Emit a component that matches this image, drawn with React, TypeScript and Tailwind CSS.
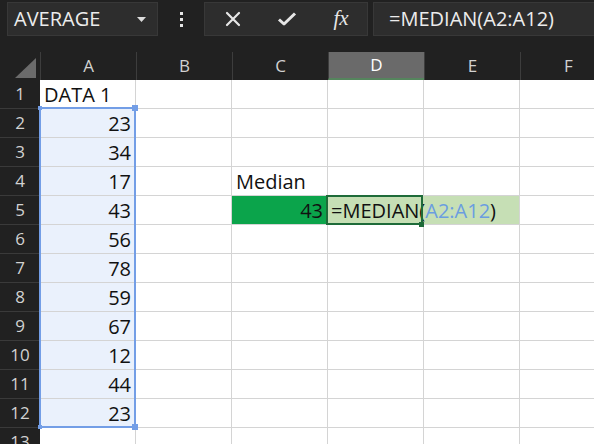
import React from "react"

const cols = ["A", "B", "C", "D", "E", "F"]
const data = ["DATA 1", "23", "34", "17", "43", "56", "78", "59", "67", "12", "44", "23", ""]

const XIcon = () => (
  <svg width="16" height="16" viewBox="0 0 16 16">
    <path d="M2 2 L14 14 M14 2 L2 14" stroke="#e6e6e6" strokeWidth="2.2" strokeLinecap="round" />
  </svg>
)

const CheckIcon = () => (
  <svg width="20" height="16" viewBox="0 0 20 16">
    <path d="M2 8.5 L7 13 L18 2.5" stroke="#e6e6e6" strokeWidth="3" fill="none" strokeLinejoin="round" />
  </svg>
)

const Cell = ({ row, col }: { row: number; col: number }) => {
  // column A holds the data, C4/C5 the label and result, D5 is being edited
  if (col === 0) {
    const text = data[row - 1]
    const inSel = row >= 2 && row <= 12
    return (
      <div
        className={`w-[96px] shrink-0 h-full border-r border-b border-[#d4d4d4] flex items-end pb-[1px] px-[4px] leading-[24px] ${
          inSel ? "bg-[#eaf1fc] justify-end" : "bg-white"
        }`}
      >
        {text}
      </div>
    )
  }
  if (col === 2 && row === 4) {
    return (
      <div className="w-[96px] shrink-0 h-full border-r border-b border-[#d4d4d4] bg-white flex items-end pb-[1px] px-[4px] leading-[24px]">
        Median
      </div>
    )
  }
  if (col === 2 && row === 5) {
    return (
      <div className="w-[96px] shrink-0 h-full border-r border-b border-[#d4d4d4] bg-[#0ba44b] flex items-end justify-end pb-[1px] px-[4px] leading-[24px]">
        43
      </div>
    )
  }
  if (col === 3 && row === 5) {
    return (
      <div className="relative z-10 w-[96px] shrink-0 h-full border-b border-[#d4d4d4] bg-[#c6dfb5] flex items-end pb-[1px] pl-[3px] leading-[24px] whitespace-nowrap overflow-visible">
        <span>=MEDIAN(</span>
        <span className="text-[#6b9de0]">A2:A12</span>
        <span>)</span>
        <span className="ml-[2px] mb-[1px] w-px h-[21px] bg-black" />
      </div>
    )
  }
  if (col === 4 && row === 5) {
    return <div className="w-[96px] shrink-0 h-full border-r border-b border-[#d4d4d4] bg-[#c6dfb5]" />
  }
  return <div className="w-[96px] shrink-0 h-full border-r border-b border-[#d4d4d4] bg-white" />
}

export default function App() {
  const rows = Array.from({ length: 13 }, (_, i) => i + 1)
  return (
    <div className="w-[594px] h-[444px] overflow-hidden bg-[#212121] font-['Open_Sans',sans-serif] text-[20px] text-[#111]">
      {/* formula bar */}
      <div className="h-[52px] flex items-start pt-[2px] pl-[7px]">
        <div className="w-[151px] h-[34px] shrink-0 bg-[#2d2d2d] border border-[#383838] flex items-center justify-between pl-[6px] pr-[11px] text-[#ececec]">
          <span>AVERAGE</span>
          <svg width="9" height="5" viewBox="0 0 9 5">
            <path d="M0 0 L9 0 L4.5 5 Z" fill="#dcdcdc" />
          </svg>
        </div>
        <div className="w-[46px] h-[34px] shrink-0 flex flex-col items-center justify-center gap-[3px]">
          <div className="w-[3px] h-[3px] bg-[#e6e6e6]" />
          <div className="w-[3px] h-[3px] bg-[#e6e6e6]" />
          <div className="w-[3px] h-[3px] bg-[#e6e6e6]" />
        </div>
        <div className="w-[164px] h-[34px] shrink-0 bg-[#2d2d2d] border border-[#383838] flex items-center">
          <div className="w-[54px] flex justify-center pl-[2px]">
            <XIcon />
          </div>
          <div className="w-[56px] flex justify-center">
            <CheckIcon />
          </div>
          <div className="w-[52px] flex justify-center font-['Liberation_Serif',serif] italic text-[21px] text-[#e6e6e6] leading-none pb-[2px]">
            fx
          </div>
        </div>
        <div className="ml-[5px] flex-1 h-[34px] bg-[#2d2d2d] border border-[#383838] border-r-0 flex items-center pl-[15px] text-[#ececec] whitespace-nowrap">
          =MEDIAN(A2:A12)
        </div>
      </div>

      {/* column headers */}
      <div className="h-[28px] flex">
        <div className="w-[40px] shrink-0 h-full relative">
          <svg className="absolute left-[15px] top-[6px]" width="21" height="20" viewBox="0 0 21 20">
            <path d="M21 0 L21 20 L0 20 Z" fill="#6b6b6b" />
          </svg>
        </div>
        {cols.map((c) => (
          <div
            key={c}
            className={`w-[96px] shrink-0 h-full border-l border-[#3d3d3d] flex items-center justify-center text-[17px] ${
              c === "D" ? "bg-[#6a6a6a] text-white border-b-2 border-b-[#55855d]" : "text-[#d2d2d2]"
            }`}
          >
            {c}
          </div>
        ))}
      </div>

      {/* grid */}
      <div className="relative">
        {rows.map((r) => (
          <div key={r} className="h-[29px] flex">
            <div className="w-[40px] shrink-0 h-full border-b border-[#3a3a3a] flex items-center justify-center text-[17px] text-[#d2d2d2]">
              {r}
            </div>
            {cols.map((_, ci) => (
              <Cell key={ci} row={r} col={ci} />
            ))}
          </div>
        ))}

        {/* A2:A12 reference highlight */}
        <div className="absolute left-[39px] top-[27px] w-[97px] h-[321px] border-2 border-[#739ee6] pointer-events-none">
          <div className="absolute -left-[3px] -top-[3px] w-[4px] h-[4px] bg-[#739ee6]" />
          <div className="absolute -right-[4px] -top-[4px] w-[6px] h-[6px] bg-[#739ee6]" />
          <div className="absolute -left-[3px] -bottom-[3px] w-[4px] h-[4px] bg-[#739ee6]" />
          <div className="absolute -right-[4px] -bottom-[4px] w-[6px] h-[6px] bg-[#739ee6]" />
        </div>

        {/* active cell D5 */}
        <div className="absolute z-20 left-[326px] top-[115px] w-[97px] h-[30px] border-2 border-[#1e6b39] pointer-events-none">
          <div className="absolute -right-[3px] -bottom-[4px] w-[5px] h-[5px] bg-[#1e6b39]" />
        </div>
      </div>
    </div>
  )
}
